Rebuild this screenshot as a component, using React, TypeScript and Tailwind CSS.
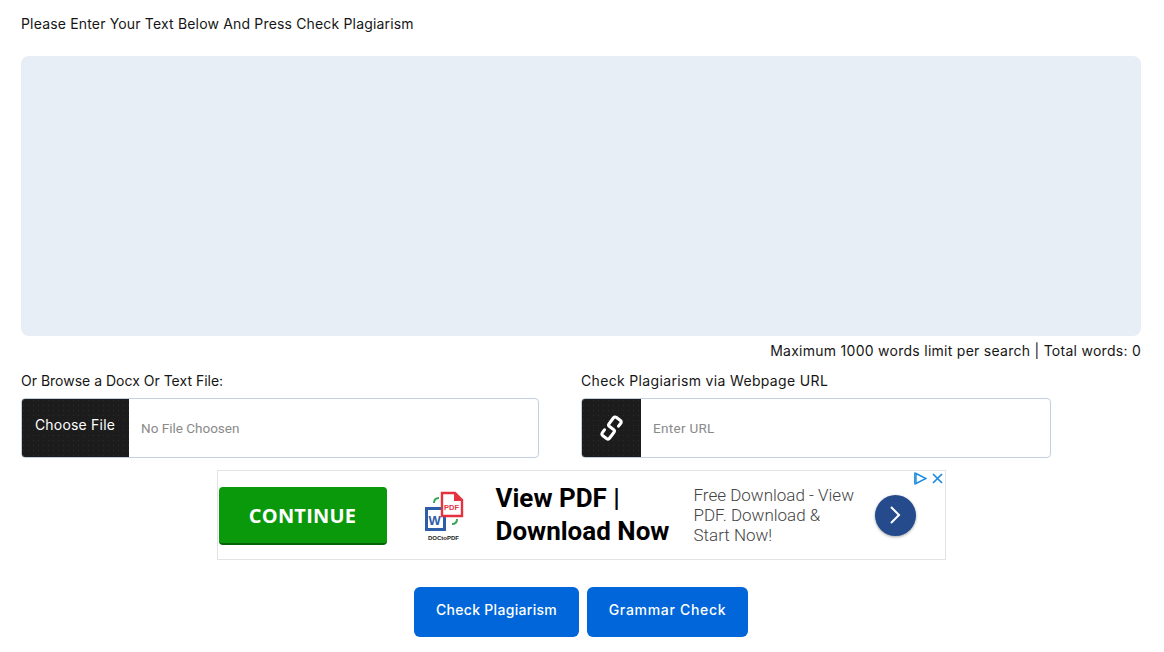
const body = "font-['Inter','Liberation_Sans',sans-serif]";
const dots = "bg-[#1c1c1c] bg-[radial-gradient(#2c2c2c_0.6px,transparent_0.7px)] bg-[size:5px_5px]";

function LinkIcon() {
  return (
    <svg width="25" height="30" viewBox="0 0 22 26" fill="none" stroke="white" strokeWidth="2.7" strokeLinecap="round" strokeLinejoin="round">
      <path d="M17.2 11.4 L19 9 Q20.2 7.4 18.6 6.2 L15.4 3.8 Q13.8 2.6 12.6 4.2 L8.8 9.3 Q7.8 10.6 9 11.5 L13 14.5 Q14.2 15.4 13.2 16.7 L9.4 21.8 Q8.2 23.4 6.6 22.2 L3.4 19.8 Q1.8 18.6 3 17 L4.8 14.6" />
    </svg>
  );
}

function DocLogo() {
  return (
    <div className="flex flex-col items-center w-[40px]">
      <svg width="40" height="41" viewBox="0 0 40 41">
        <rect x="1" y="16" width="21" height="24" fill="#2f5ea8" />
        <rect x="4" y="19" width="15" height="18" fill="#ffffff" />
        <text x="4.5" y="34" fontSize="13" fontWeight="700" fill="#2f5ea8" fontFamily="Liberation Sans, sans-serif">W</text>
        <path d="M18 2 H31 L38 9 V25 H18 Z" fill="#ffffff" stroke="#e5323f" strokeWidth="2.4" />
        <path d="M30 2 V10 H38 Z" fill="#e5323f" />
        <text x="20" y="19" fontSize="7.5" fontWeight="700" fill="#e5323f" fontFamily="Liberation Sans, sans-serif">PDF</text>
        <path d="M10 12 C10 8 12 7 15 7" stroke="#3aa655" strokeWidth="2" fill="none" />
        <path d="M33 28 C33 32 31 33 28 33" stroke="#3aa655" strokeWidth="2" fill="none" />
      </svg>
      <span className="font-['Liberation_Sans',sans-serif] text-[6px] leading-[8px] font-bold text-[#222] mt-[2px]">DOCtoPDF</span>
    </div>
  );
}

function Ad() {
  return (
    <div className="relative w-[729px] h-[90px] border border-[#e3e3e3] bg-white flex items-center self-center font-['Roboto',sans-serif]">
      <div className="ml-[1px] mt-[2px] pt-[2px] w-[168px] h-[58px] rounded-[4px] bg-[#0a990a] border-b-2 border-[#066006] flex items-center justify-center text-white font-bold text-[20px] tracking-[0.2px] font-['Open_Sans',sans-serif]">
        CONTINUE
      </div>
      <div className="ml-[37px] mt-[2px]"><DocLogo /></div>
      <div className="ml-[32px] w-[198px] text-[26px] leading-[33px] font-bold text-black">
        View PDF |<br />Download Now
      </div>
      <div className="w-[181px] text-[17px] leading-[20px] font-light text-[#444]">
        Free Download - View<br />PDF. Download &amp;<br />Start Now!
      </div>
      <div className="w-[41px] h-[41px] rounded-full bg-[#254b8c] shadow-[0_1px_3px_rgba(0,0,0,0.35)] flex items-center justify-center">
        <svg width="14" height="20" viewBox="0 0 14 20" fill="none" stroke="white" strokeWidth="2">
          <path d="M3 2 L11 10 L3 18" />
        </svg>
      </div>
      <div className="absolute top-[1px] right-[2px] flex items-center gap-[5px]">
        <svg width="13" height="13" viewBox="0 0 13 13" fill="none" stroke="#1a8be0" strokeWidth="1.4">
          <path d="M2 1.5 L12 6.5 L2 11.5 Z" />
          <path d="M0.8 0.5 V12.5" />
        </svg>
        <svg width="11" height="11" viewBox="0 0 11 11" fill="none" stroke="#1a8be0" strokeWidth="1.7">
          <path d="M1 1 L10 10 M10 1 L1 10" />
        </svg>
      </div>
    </div>
  );
}

export default function App() {
  return (
    <div className={`${body} w-[1164px] h-[652px] overflow-hidden bg-white pl-[21px] pr-[23px] text-[#161616] flex flex-col`}>
      <p className="mt-[15px] h-[18px] text-[14px] leading-[18px] tracking-[0.17px]">Please Enter Your Text Below And Press Check Plagiarism</p>
      <div className="mt-[23px] h-[280px] rounded-[8px] bg-[#e7eef6]" />
      <p className="mt-[6px] h-[18px] text-right text-[14px] leading-[18px] tracking-[0.27px]">Maximum 1000 words limit per search | Total words: 0</p>
      <div className="mt-[11px] flex">
        <div className="w-[518px]">
          <p className="h-[18px] text-[14px] leading-[18px] mt-[1px]">Or Browse a Docx Or Text File:</p>
          <div className="mt-[8px] h-[60px] flex rounded-[4px] border border-[#c2d0e2] overflow-hidden">
            <div className={`${dots} w-[108px] shrink-0 -ml-px -my-px flex items-center justify-center pb-[8px] text-white text-[14px] tracking-[0.2px]`}>Choose File</div>
            <div className="flex items-center pl-[12px] text-[13.5px] text-[#8a8a8a] font-['Roboto',sans-serif] pt-[1px]">No File Choosen</div>
          </div>
        </div>
        <div className="ml-[42px] w-[470px]">
          <p className="h-[18px] text-[14px] leading-[18px] mt-[1px] tracking-[0.34px]">Check Plagiarism via Webpage URL</p>
          <div className="mt-[8px] h-[60px] flex rounded-[4px] border border-[#c2d0e2] overflow-hidden">
            <div className={`${dots} w-[60px] shrink-0 -ml-px -my-px flex items-center justify-center`}><LinkIcon /></div>
            <div className="flex items-center pl-[12px] text-[13.5px] tracking-[0.3px] text-[#8a8a8a] font-['Roboto',sans-serif] pt-[1px]">Enter URL</div>
          </div>
        </div>
      </div>
      <div className="mt-[12px] flex justify-center"><Ad /></div>
      <div className="mt-[27px] flex justify-center gap-[8px]">
        <button className="w-[165px] h-[50px] rounded-[6px] bg-[#0066d9] text-white text-[14px] font-medium pb-[5px] tracking-[0.3px]">Check Plagiarism</button>
        <button className="w-[161px] h-[50px] rounded-[6px] bg-[#0066d9] text-white text-[14px] font-medium pb-[5px] tracking-[0.7px]">Grammar Check</button>
      </div>
    </div>
  );
}
